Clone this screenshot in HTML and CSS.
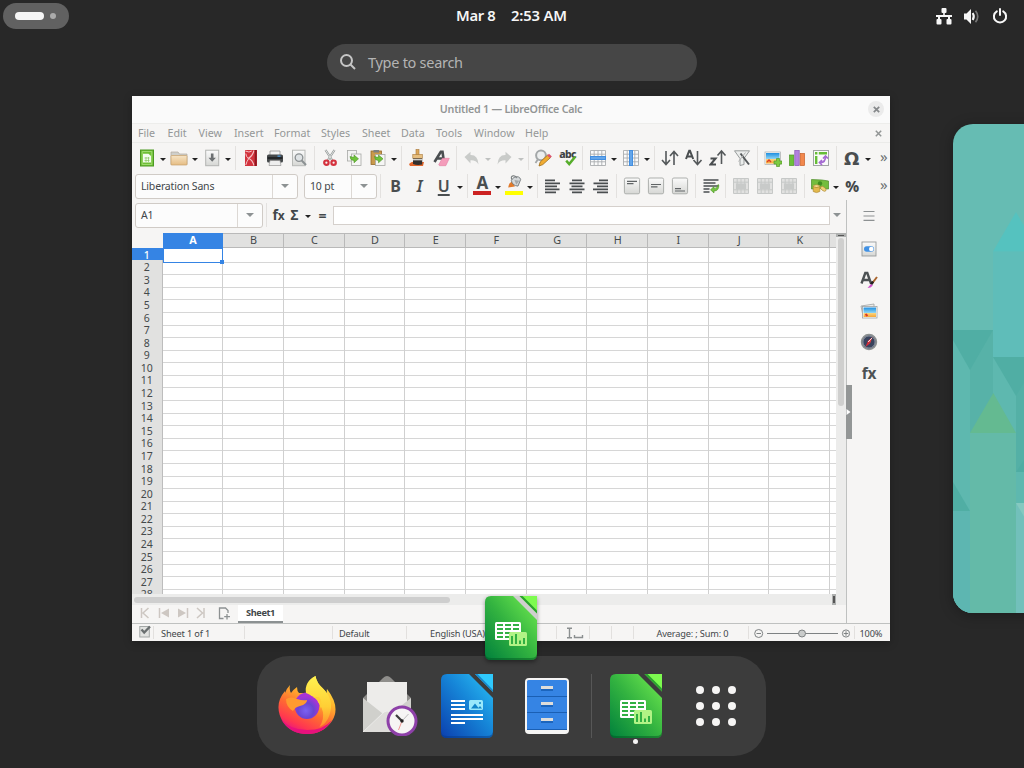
FILE: index.html
```html
<!DOCTYPE html>
<html lang="en">
<head>
<meta charset="utf-8">
<title>Activities</title>
<link rel="stylesheet" href="styles.css">
</head>
<body>
<svg class="defs" aria-hidden="true">
  <defs>
    <linearGradient id="g-calc" x1="0" y1="1" x2="1" y2="0"><stop offset="0" stop-color="#00803c"/><stop offset=".5" stop-color="#33b340"/><stop offset="1" stop-color="#74ee50"/></linearGradient>
    <linearGradient id="g-writer" x1="0" y1="1" x2="1" y2="0"><stop offset="0" stop-color="#0b3fae"/><stop offset=".55" stop-color="#1686d8"/><stop offset="1" stop-color="#2cc3f6"/></linearGradient>
    <linearGradient id="g-fox" x1=".8" y1="0" x2=".3" y2="1"><stop offset="0" stop-color="#fff44f"/><stop offset=".35" stop-color="#ffb62c"/><stop offset=".62" stop-color="#ff6a32"/><stop offset=".85" stop-color="#ff3750"/><stop offset="1" stop-color="#e5108a"/></linearGradient>
    <radialGradient id="g-globe" cx=".45" cy=".65" r=".65"><stop offset="0" stop-color="#7a62f2"/><stop offset=".5" stop-color="#6a45d2"/><stop offset="1" stop-color="#b52fd8"/></radialGradient>
    <linearGradient id="g-flame" x1="0" y1="0" x2="0" y2="1"><stop offset="0" stop-color="#fff250"/><stop offset=".6" stop-color="#ffcf35"/><stop offset="1" stop-color="#ff8a2d"/></linearGradient>
    <linearGradient id="g-box" x1="0" y1="0" x2="0" y2="1"><stop offset="0" stop-color="#fbfbfb"/><stop offset="1" stop-color="#d6d7d4"/></linearGradient>
    <linearGradient id="g-folder" x1="0" y1="0" x2="0" y2="1"><stop offset="0" stop-color="#f6e4c6"/><stop offset="1" stop-color="#e6bd83"/></linearGradient>
    <linearGradient id="g-sky" x1="0" y1="0" x2="0" y2="1"><stop offset="0" stop-color="#1f8fe0"/><stop offset=".55" stop-color="#8cd4f5"/><stop offset=".6" stop-color="#fbd47c"/><stop offset="1" stop-color="#f6a637"/></linearGradient>
    <clipPath id="c-doc"><path d="M0 6Q0 0 6 0H52V58Q52 64 46 64H6Q0 64 0 58Z"/></clipPath>
  </defs>
  <symbol id="new" viewBox="0 0 18 18"><rect x="2.500" y="1" width="13" height="16" fill="#6fbf35" stroke="#4c9a22"/><path d="M4.200 2.500h9.600v13H4.200Z" fill="none" stroke="#a9e07d" stroke-width=".8"/><path d="M5 4.800h5.500l2.500 2.200v6.500H5Z" fill="#f4fcee"/><path d="M6.500 9h5M6.500 11.500h5M8 8v5M10.500 8v5" stroke="#86c460" stroke-width=".7"/></symbol>
  <symbol id="open" viewBox="0 0 18 18"><path d="M1 15.500V3h7l1.500 2H17v10.500Z" fill="#cfcfcb" stroke="#b2aa9d" stroke-width=".7"/><rect x="1" y="6.500" width="16" height="9.500" rx=".6" fill="url(#g-folder)" stroke="#c7a06b" stroke-width=".7"/></symbol>
  <symbol id="save" viewBox="0 0 18 18"><rect x="2.700" y="1.200" width="13" height="15.500" fill="url(#g-box)" stroke="#b3b5b2"/><path d="M7.900 4.500h2.600v4.200h2.400l-3.700 4-3.700-4h2.400Z" fill="#6c7072"/></symbol>
  <symbol id="pdf" viewBox="0 0 18 18"><rect x="3" y="1" width="12" height="16" fill="#d2333d"/><path d="M3.300 2q4 2 6.500 0M3.800 16q1-4 3-6.500-3-1.500-3-5" fill="none" stroke="#f4c4c6" stroke-width="1"/><path d="M12 1.500Q10.500 7 6.500 9.200q4 1.800 5.500 7.300" fill="none" stroke="#f4c4c6" stroke-width="1.100"/><path d="M13.700 1v16" stroke="#8f1720" stroke-width="2"/></symbol>
  <symbol id="print" viewBox="0 0 18 18"><path d="M4 6V2h10v4" fill="#f4f4f4" stroke="#888" stroke-width=".7"/><rect x="1" y="5.500" width="16" height="8" rx="1.600" fill="#45494b"/><rect x="1.600" y="8" width="14.800" height="2" fill="#232629"/><rect x="11.500" y="6.500" width="3" height="1.300" fill="#4f9cde"/><path d="M4 11.500h10l1 5H3Z" fill="#eee" stroke="#888" stroke-width=".6"/></symbol>
  <symbol id="preview" viewBox="0 0 18 18"><rect x="2.500" y="1.200" width="12.500" height="15.500" fill="url(#g-box)" stroke="#b8bab7"/><circle cx="9" cy="8.600" r="3.800" fill="#dfe3e5" stroke="#8c9193" stroke-width="1.300"/><path d="m11.700 11.500 4.300 4.500" stroke="#8c9193" stroke-width="2"/></symbol>
  <symbol id="cut" viewBox="0 0 18 18"><path d="M4.500 1 12 12.500M13.500 1 6 12.500" stroke="#8f9493" stroke-width="2.200"/><path d="M4.500 1 12 12.500M13.500 1 6 12.500" stroke="#e9ebea" stroke-width=".9"/><circle cx="5.400" cy="13.700" r="2.200" fill="none" stroke="#d5323e" stroke-width="2.200"/><circle cx="12.600" cy="13.700" r="2.200" fill="none" stroke="#d5323e" stroke-width="2.200"/></symbol>
  <symbol id="copy" viewBox="0 0 18 18"><rect x="2.500" y="1.500" width="9" height="10.500" fill="#f3f3f2" stroke="#a7a9a6" stroke-width=".8"/><rect x="6.500" y="5" width="9.500" height="11.500" fill="#f7f7f6" stroke="#a7a9a6" stroke-width=".8"/><path d="M5 7.500q0 4 4 4v2.300l4.500-4-4.500-3.800v2.300q-2 0-4-.8Z" fill="#6fc33c" stroke="#4d9325" stroke-width=".6"/></symbol>
  <symbol id="paste" viewBox="0 0 18 18"><rect x="2" y="2" width="10.500" height="13.500" fill="#c99a4b" stroke="#94692a" stroke-width=".8"/><rect x="4.500" y="1" width="5.500" height="2.500" fill="#7d8081"/><rect x="6.500" y="5.500" width="9.500" height="11" fill="#f5f5f4" stroke="#a7a9a6" stroke-width=".8"/><path d="M5.500 7.500q0 4 4 4v2.300l4.500-4-4.500-3.800v2.300q-2 0-4-.8Z" fill="#6fc33c" stroke="#4d9325" stroke-width=".6"/></symbol>
  <symbol id="brush" viewBox="0 0 18 18"><path d="M1 15q3-3 6-2h9l-1 4H2Z" fill="#e3662b"/><rect x="8" y=".5" width="3" height="6.500" fill="#dca75c" stroke="#a9793a" stroke-width=".6"/><rect x="4.800" y="5.500" width="9.500" height="4" fill="#e7bf80" stroke="#a9793a" stroke-width=".6"/><path d="M5 9.500h9.200v6q-5 1.200-9.200-.5Z" fill="#33302e"/><path d="M5 10.700h9.200" stroke="#d8d8d6" stroke-width="1.300"/></symbol>
  <symbol id="clear" viewBox="0 0 18 18"><path d="M2.500 13 8.800 2.800h1.700l1.400 9.700M5.500 9.500h5.500" fill="none" stroke="#4a4e50" stroke-width="2.600"/><path d="m6.700 15.800 3.600-6.500h7l-3.500 7.400H7.500Z" fill="#f49cba" stroke="#e37ca1" stroke-width=".6"/></symbol>
  <symbol id="undo" viewBox="0 0 18 18"><path d="m1.500 8 6-5.200v3.200q7.500-.3 8 9.500-2.400-4.500-8-4.200v3.200Z" fill="#c9cbc9"/></symbol>
  <symbol id="find" viewBox="0 0 18 18"><circle cx="7" cy="6.300" r="4.900" fill="#eceeee" stroke="#a3a7a8" stroke-width="2"/><path d="m3.800 10.500-2.300 3.500" stroke="#a3a7a8" stroke-width="1.800"/><path d="m5 17 1.200-4 7.500-7 2.800 2.600-7.700 7Z" fill="#f1ac32" stroke="#9d6b13" stroke-width=".8"/><path d="m13.200 6.500 1.800-1.800 2.900 2.700-1.900 1.700Z" fill="#dc5470"/></symbol>
  <symbol id="check" viewBox="0 0 18 18"><path d="m7.200 11.700 3 3.300 6-7.200" fill="none" stroke="#56ad2b" stroke-width="2.500"/></symbol>
  <symbol id="rows" viewBox="0 0 18 18"><path d="M1.500 1.500h15v15h-15ZM1.500 5.200h15M1.500 12.800h15M5.200 1.500v15M9 1.500v15M12.800 1.500v15" fill="#fbfbfb" stroke="#a9adaf" stroke-width=".9"/><rect x="1" y="7" width="16" height="4" fill="#428ee0"/><path d="M2 9h14" stroke="#84bcf3"/></symbol>
  <symbol id="sort" viewBox="0 0 18 18"><path d="M5 2v13M1 11l4 4.500L9 11M13 16V3M9 7l4-4.500L17 7" fill="none" stroke="#54585a" stroke-width="1.600"/></symbol>
  <symbol id="az" viewBox="0 0 18 18"><path d="M1 10 4.200 1.800h.8L8.200 10M2.200 7.500H7" fill="none" stroke="#4a4e50" stroke-width="2"/><path d="M12.500 2v13M8.500 11l4 4.500 4-4.500" fill="none" stroke="#54585a" stroke-width="1.600"/></symbol>
  <symbol id="za" viewBox="0 0 18 18"><path d="M1.500 9.500h5l-5 6h5.500" fill="none" stroke="#4a4e50" stroke-width="2.100"/><path d="M12.500 15V2M8.500 6.500l4-4.500 4 4.500" fill="none" stroke="#54585a" stroke-width="1.600"/></symbol>
  <symbol id="filter" viewBox="0 0 18 18"><path d="M1.500 1.800h15L11 9.500v6l-4 1V9.500Z" fill="#ebedec" stroke="#989c9c"/><path d="m7.500 4.500 8.500 11" stroke="#54585a" stroke-width="2"/><path d="m12.500 3.500-7 9" stroke="#b5b5b5"/></symbol>
  <symbol id="image" viewBox="0 0 18 18"><rect x="1" y="3" width="15.500" height="12.500" fill="#fff" stroke="#a5a9a8" stroke-width=".7"/><rect x="2" y="4" width="13.500" height="10.500" fill="url(#g-sky)"/><path d="m3 13 2-2 2 2" stroke="#dd3d28" stroke-width="1.500" fill="none"/></symbol>
  <symbol id="plus" viewBox="0 0 18 18"><path d="M12.500 9.500h3v2.500H18v3h-2.500v2.500h-3V15H10v-3h2.500Z" fill="#7ecb42" stroke="#55992b" stroke-width=".7"/></symbol>
  <symbol id="chart" viewBox="0 0 18 18"><rect x="1.500" y="6" width="4.300" height="10.500" fill="#6dc03b" stroke="#4b9824" stroke-width=".7"/><rect x="6.800" y="1.500" width="4.400" height="15" fill="#b180de" stroke="#8652b7" stroke-width=".7"/><rect x="12.200" y="4.500" width="4.300" height="12" fill="#f2884d" stroke="#c65f27" stroke-width=".7"/></symbol>
  <symbol id="pivot" viewBox="0 0 18 18"><rect x="1.500" y="1.500" width="15" height="15" fill="#fafafa" stroke="#a1a5a4"/><path d="M3 4.200h2.400M6.800 4.200H15M4.200 7v8" fill="none" stroke="#66bd38" stroke-width="2.400"/><path d="M8.500 13.500q5 0 5-6M11 9.500 13.500 7 16 9.500M10 11l-2.500 2.500L10 16" fill="none" stroke="#a56bd2" stroke-width="1.700"/></symbol>
  <symbol id="al" viewBox="0 0 18 18"><path d="M1 3.300h10M1 6.300h15M1 9.300h12M1 12.300h14.500M1 15.300h11" stroke="#4a4e50" stroke-width="1.700"/></symbol>
  <symbol id="ac" viewBox="0 0 18 18"><path d="M4 3.300h10M1.500 6.300h15M3.500 9.300h11M1.500 12.300h15M4 15.300h10" stroke="#4a4e50" stroke-width="1.700"/></symbol>
  <symbol id="ar" viewBox="0 0 18 18"><path d="M7 3.300h9M1.500 6.300H16M5 9.300h11M1 12.300h15M5 15.300h11" stroke="#4a4e50" stroke-width="1.700"/></symbol>
  <symbol id="vt" viewBox="0 0 18 18"><rect x="1.400" y="1" width="15.200" height="15.800" rx="1.500" fill="url(#g-box)" stroke="#adafad"/><path d="M4 4.300h10M4 6.700h6.500" stroke="#606466" stroke-width="1.200"/></symbol>
  <symbol id="vm" viewBox="0 0 18 18"><rect x="1.400" y="1" width="15.200" height="15.800" rx="1.500" fill="url(#g-box)" stroke="#adafad"/><path d="M4 7.500h10M4 9.900h6.500" stroke="#606466" stroke-width="1.200"/></symbol>
  <symbol id="vb" viewBox="0 0 18 18"><rect x="1.400" y="1" width="15.200" height="15.800" rx="1.500" fill="url(#g-box)" stroke="#adafad"/><path d="M4 11.700h6M4 14h10" stroke="#606466" stroke-width="1.200"/></symbol>
  <symbol id="wrap" viewBox="0 0 18 18"><path d="M1.500 3h15M1.500 6h12M1.500 9h15M1.500 12h6M1.500 15h6" stroke="#4a4e50" stroke-width="1.700"/><path d="M16 7.500q0 4-4 4V9.500l-3.500 3.300L12 16v-2q5 0 4.800-6Z" fill="#74c442" stroke="#4f9627" stroke-width=".6"/></symbol>
  <symbol id="merge" viewBox="0 0 18 18"><path d="M1.500 1.500h15v15h-15ZM1.500 5.200h15M1.500 12.800h15M5.200 1.500v15M9 1.500v15M12.800 1.500v15" fill="#e1e1e0" stroke="#c6c8c7"/><rect x="4" y="6.500" width="10" height="5.500" fill="#c8cac9"/></symbol>
  <symbol id="money" viewBox="0 0 18 18"><path d="M.5 2.500 11 3l6.500 1v8l-6-.5L.5 12Z" fill="#73bd3d" stroke="#4b8b25" stroke-width=".7"/><circle cx="9" cy="6.500" r="2.200" fill="#3f8d20"/><ellipse cx="5.500" cy="9.300" rx="3.300" ry="1.500" fill="#f6dd92" stroke="#a8822b" stroke-width=".6"/><path d="M2.200 9.500v5q3.300 2.200 6.600 0v-5q-3.300 2-6.600 0Z" fill="#e3b94c" stroke="#a8822b" stroke-width=".6"/><ellipse cx="12.300" cy="11.800" rx="3.200" ry="1.800" transform="rotate(38 12.300 11.800)" fill="#efd27a" stroke="#a8822b" stroke-width=".6"/></symbol>
  <symbol id="bucket" viewBox="0 0 18 18"><path d="M2.500 14q.5-5.500 5-7l2.500 6Z" fill="#e17a2b"/><path d="m6 6 3-3.500q6-2 7.500 2.500l-3 7.500q-6.500-.5-7.500-6.500Z" fill="#d4d8da" stroke="#6e7476"/><path d="m9.500 5.500 5.500 1-3.500 4.500Z" fill="#a4a9ab"/><path d="M6.500 5q-1.500-3.500 1.500-4t4 2.500" fill="none" stroke="#777c7e" stroke-width="1.200"/></symbol>
  <symbol id="calc" viewBox="0 0 52 64"><g clip-path="url(#c-doc)"><path d="M0 0H28L52 24V64H0Z" fill="url(#g-calc)"/><path d="M34.500 0H52V17.500Z" fill="#7dfb4f"/><path d="m34.500 0 17.500 17.500v-3L37.500 0Z" fill="#2aa02f"/><path d="M0 57q0 5 6 5h40q6 0 6-5v7H0Z" fill="#00501f" opacity=".45"/></g><rect x="10" y="26" width="26" height="18" rx="1.500" fill="#fff"/><path d="M12 29h6M20 29h6M28 29h6M12 33h6M20 33h6M28 33h6M12 37h6M20 37h6M28 37h6M12 41h6M20 41h6" stroke="#31b043" stroke-width="2"/><rect x="24" y="36" width="18" height="14" rx="1.500" fill="#b1f385"/><path d="M27 48v-8M31 48V38M35 48v-3.500M39 48v-6" stroke="#31b043" stroke-width="2"/></symbol>
</svg>

<header class="topbar">
  <div class="workspaces"><i class="ws-on"></i><i class="ws-off"></i></div>
  <div class="clock"><span class="date">Mar 8</span><span class="time">2:53 AM</span></div>
  <div class="tray">
    <svg width="16" height="17" viewBox="0 0 16 17" fill="#f7f7f7"><rect x="5.500" width="5" height="5" rx="1"/><rect x=".5" y="11" width="5" height="5.500" rx="1"/><rect x="10.500" y="11" width="5" height="5.500" rx="1"/><path d="M7.200 4h1.600v3H16v2h-2v3h-2V9H4v3H2V9H0V7h7.200Z"/></svg>
    <svg width="18" height="17" viewBox="0 0 18 17"><path d="M1 5.500h2.500L8 1v15l-4.500-4.500H1Z" fill="#f7f7f7"/><path d="M9.700 5q2.200 3.500 0 7" fill="none" stroke="#f7f7f7" stroke-width="2"/><path d="M12.500 2.800q4.500 5.700 0 11.400" fill="none" stroke="#777" stroke-width="1.700"/></svg>
    <svg width="16" height="16" viewBox="0 0 16 16" fill="none" stroke="#f7f7f7" stroke-width="2" stroke-linecap="round"><path d="M4.800 3.300a6.100 6.100 0 1 0 6.400 0M8 1V7"/></svg>
  </div>
</header>

<div class="search">
  <svg width="18" height="18" viewBox="0 0 18 18" fill="none" stroke="#c6c6c6" stroke-width="2"><circle cx="7.500" cy="7.500" r="5.500"/><path d="m11.500 11.500 4.500 4.500"/></svg>
  <span>Type to search</span>
</div>

<main class="window">
  <div class="titlebar"><span class="title">Untitled 1 — LibreOffice Calc</span><span class="close"><svg width="7" height="7" viewBox="0 0 7 7"><path d="m.8.8 5.400 5.400m0-5.400L.8 6.200" stroke="#85888a" stroke-width="1.700"/></svg></span></div>
  <nav class="menubar">
    <span class="m-file">File</span><span class="m-edit">Edit</span><span class="m-view">View</span><span class="m-insert">Insert</span><span class="m-format">Format</span><span class="m-styles">Styles</span><span class="m-sheet">Sheet</span><span class="m-data">Data</span><span class="m-tools">Tools</span><span class="m-window">Window</span><span class="m-help">Help</span>
    <svg class="docclose" width="7" height="7" viewBox="0 0 7 7"><path d="m.8.8 5.400 5.400m0-5.400L.8 6.200" stroke="#929595" stroke-width="1.500"/></svg>
  </nav>

  <div class="toolbar standard">
    <b class="ic"><svg><use href="#new"/></svg></b><i class="car"></i>
    <b class="ic"><svg><use href="#open"/></svg></b><i class="car"></i>
    <b class="ic"><svg><use href="#save"/></svg></b><i class="car"></i><i class="sep"></i>
    <b class="ic"><svg><use href="#pdf"/></svg></b><b class="ic"><svg><use href="#print"/></svg></b><b class="ic"><svg><use href="#preview"/></svg></b><i class="sep"></i>
    <b class="ic"><svg><use href="#cut"/></svg></b><b class="ic"><svg><use href="#copy"/></svg></b><b class="ic"><svg><use href="#paste"/></svg></b><i class="car"></i><i class="sep"></i>
    <b class="ic"><svg><use href="#brush"/></svg></b><b class="ic"><svg><use href="#clear"/></svg></b><i class="sep"></i>
    <b class="ic"><svg><use href="#undo"/></svg></b><i class="car off"></i><b class="ic flip"><svg><use href="#undo"/></svg></b><i class="car off"></i><i class="sep"></i>
    <b class="ic"><svg><use href="#find"/></svg></b><b class="ic spell"><span>abc</span><svg><use href="#check"/></svg></b><i class="sep"></i>
    <b class="ic"><svg><use href="#rows"/></svg></b><i class="car"></i><b class="ic turn"><svg><use href="#rows"/></svg></b><i class="car"></i><i class="sep"></i>
    <b class="ic"><svg><use href="#sort"/></svg></b><b class="ic"><svg><use href="#az"/></svg></b><b class="ic"><svg><use href="#za"/></svg></b><b class="ic"><svg><use href="#filter"/></svg></b><i class="sep"></i>
    <b class="ic"><svg><use href="#image"/><use href="#plus"/></svg></b><b class="ic"><svg><use href="#chart"/></svg></b><b class="ic"><svg><use href="#pivot"/></svg></b><i class="sep"></i>
    <b class="ic omega">Ω</b><i class="car"></i><span class="more">»</span>
  </div>

  <div class="toolbar formatting">
    <div class="combo font"><span>Liberation Sans</span><i class="drop"></i></div>
    <div class="combo size"><span>10 pt</span><i class="drop"></i></div><i class="sep"></i>
    <b class="ic ltr">B</b><b class="ic ltr ital">I</b><b class="ic ltr under">U</b><i class="car"></i><i class="sep"></i>
    <b class="ic ltr fontcolor">A</b><i class="car"></i><b class="ic hilite"><svg><use href="#bucket"/></svg></b><i class="car"></i><i class="sep"></i>
    <b class="ic"><svg><use href="#al"/></svg></b><b class="ic"><svg><use href="#ac"/></svg></b><b class="ic"><svg><use href="#ar"/></svg></b><i class="sep"></i>
    <b class="ic"><svg><use href="#vt"/></svg></b><b class="ic"><svg><use href="#vm"/></svg></b><b class="ic"><svg><use href="#vb"/></svg></b><i class="sep"></i>
    <b class="ic"><svg><use href="#wrap"/></svg></b><i class="sep"></i>
    <b class="ic"><svg><use href="#merge"/></svg></b><b class="ic"><svg><use href="#merge"/></svg></b><b class="ic"><svg><use href="#merge"/></svg></b><i class="sep"></i>
    <b class="ic"><svg><use href="#money"/></svg></b><i class="car"></i><b class="ic pct">%</b><span class="more">»</span>
  </div>

  <div class="work">
    <section class="editor">
      <div class="formula">
        <div class="combo name"><span>A1</span><i class="drop"></i></div><i class="sep"></i>
        <b class="fx">f<small>x</small></b><b class="sigma">Σ</b><i class="car"></i><b class="eq">=</b><div class="input"></div><i class="drop"></i>
      </div>
      <div class="sheetwrap">
        <div class="sheet" id="sheet"></div>
        <div class="vscroll"><i class="split"></i><i class="vthumb"></i></div>
      </div>
      <div class="hscroll"><i class="hthumb"></i><i class="hsplit"></i></div>
      <div class="tabs">
        <svg width="66" height="12" viewBox="0 0 66 12" fill="none" stroke="#cdc7c2" stroke-width="1.500"><path d="M1.500 1v10M8.500 1 3 6l5.500 5M19.500 1v10M47.500 1v10M57 1l5.500 5L57 11M64 1v10"/><path d="M29 1.500v9L21 6ZM38 1.500v9L46 6Z" fill="#cdc7c2" stroke="none"/></svg>
        <svg class="addtab" width="13" height="13" viewBox="0 0 13 13" fill="none" stroke="#8d9192" stroke-width="1.300"><path d="M5.500 11.500h-4V1h6L10 3.500V6M9 7v5.500M6.200 9.700H12"/></svg>
        <span class="tab">Sheet1</span>
      </div>
    </section>
    <aside class="sidebar">
      <i class="grip"><svg width="5" height="8" viewBox="0 0 5 8"><path d="M.5 1v6l4-3Z" fill="#fff"/></svg></i>
      <svg class="s-menu" viewBox="0 0 18 18"><path d="M3.500 4.500h11M3.500 9h11M3.500 13.300h11" stroke="#8d9192" stroke-width="1.200"/></svg>
      <svg viewBox="0 0 18 18"><rect x="2" y="2" width="14" height="14" fill="url(#g-box)" stroke="#979b9b" stroke-width=".9"/><rect x="4" y="6.300" width="10" height="5.400" rx="2.700" fill="#4191e4"/><circle cx="11.300" cy="9" r="2.300" fill="#fff"/></svg>
      <svg viewBox="0 0 18 18"><path d="M1.500 12.500 5.300 2h2l3.700 10.500M3.500 9h6" fill="none" stroke="#4d5254" stroke-width="2.400"/><path d="m17 6-5 6.500" stroke="#a9642d" stroke-width="2"/><path d="m13 10.500-2 3" stroke="#222" stroke-width="2.500"/><path d="m7.500 17 3.500-4 1.800 1.500q-2 2.500-5.300 2.500Z" fill="#cf50ca"/></svg>
      <svg viewBox="0 0 18 18"><path d="m1 4 13-2v3L3 14Z" fill="#ecebe8" stroke="#9ea2a2" stroke-width=".8"/><rect x="2.500" y="4.500" width="14.500" height="11.500" fill="#fff" stroke="#9ea2a2" stroke-width=".8"/><rect x="3.500" y="5.500" width="12.500" height="9.500" fill="url(#g-sky)"/><path d="m5.500 12 2 2" stroke="#dc3a28" stroke-width="2"/></svg>
      <svg viewBox="0 0 18 18"><circle cx="9" cy="9" r="7.300" fill="#39435d" stroke="#8c9091" stroke-width="1.800"/><circle cx="9" cy="9" r="6" fill="none" stroke="#aeb4bd" stroke-width=".6"/><path d="m12.500 4-2.300 6.200-2.400-2.200Z" fill="#f04141"/><path d="m5.500 14 2.300-6 2.400 2.200Z" fill="#d22d3a"/><path d="m12 5-4 4" stroke="#fff" stroke-width=".8"/></svg>
      <b class="s-fx">fx</b>
    </aside>
  </div>

  <footer class="status">
    <span class="st-save"><svg width="12" height="13" viewBox="0 0 12 13"><rect x=".8" y="1.500" width="9.500" height="10.500" fill="#e2e3e1" stroke="#a3a7a6"/><path d="m2.500 4.500 2.700 3L11 1.500" fill="none" stroke="#6a6f70" stroke-width="2.400"/></svg></span>
    <span class="st-sheet">Sheet 1 of 1</span><span></span><span class="st-style">Default</span><span class="st-lang">English (USA)</span>
    <span class="st-ins"><svg width="18" height="12" viewBox="0 0 18 12" fill="none" stroke="#8b8f90" stroke-width="1.400"><path d="M1 1.200h5M1 10.800h5M3.500 1v10M8.500 8v2.500h8V8"/></svg></span>
    <span></span><span></span><span class="st-sum">Average: ; Sum: 0</span>
    <span class="st-zoom"><svg width="96" height="11" viewBox="0 0 96 11" fill="none" stroke="#7e8283"><path d="M13 5.500h71"/><circle cx="4.700" cy="5.500" r="4"/><path d="M2.500 5.500H7"/><circle cx="48" cy="5.500" r="3.500" fill="#c9cbca"/><circle cx="92" cy="5.500" r="3.600"/><path d="M89.700 5.500h4.600M92 3.200v4.600"/></svg></span>
    <span class="st-pct">100%</span>
  </footer>
  <svg class="badge" viewBox="0 0 52 64"><path d="M27 0h8.500L52 16.500V25Z" fill="#cfcfce"/><use href="#calc"/></svg>
</main>

<aside class="neighbour">
  <svg width="100" height="489" viewBox="0 0 100 489">
    <rect width="100" height="489" fill="#66bcb3"/>
    <path d="M40 127.500h46V233H40Z" fill="#5fbdb9"/><path d="m40 127.500 23-39.500 23 39.500Z" fill="#55c2bf"/>
    <path d="M0 206h17v283H0Z" fill="#5eb8af"/><path d="M17 206h23v140H17Z" fill="#57b2a8"/><path d="M0 206h40L17 246 0 216Z" fill="#50aea4"/>
    <path d="M40 233h23v256H40Z" fill="#5eb8af"/><path d="M63 233h37v115H63Z" fill="#54b0a6"/><path d="M40 233h46l-23 39Z" fill="#50aea4"/>
    <path d="M63 348h37v32H63Z" fill="#5eb8af"/><path d="m63 348 10-15v15Z" fill="#4fada3"/>
    <path d="M63 379h37v110H63Z" fill="#72c0bb"/><path d="M63 379h37L79 406Z" fill="#85c9c0"/>
    <path d="m0 358 17 29H0Z" fill="#50aea4"/><path d="M0 387h17v102H0Z" fill="#5db6b1"/>
    <path d="M17 309h46v180H17Z" fill="#64baa8"/><path d="m17 309 23.300-40L63 309Z" fill="#64ba91"/>
  </svg>
</aside>

<div class="dock">
  <span class="app fox"><svg width="60" height="62" viewBox="0 0 60 62">
    <path d="M13 11q-1 5 1 8 3-4 6-6 0 4 2 6H31Q27 8 38.500 2q1 7 7 12 3 3 4.500 6-.5-3 0-5Q64 33 55 47 46 60 30 60 14 60 6 48-4 31 8 17q0-1 0 2 2-5 5-8Z" fill="url(#g-fox)"/>
    <circle cx="30" cy="31" r="12.500" fill="url(#g-globe)"/>
    <path d="M29 19Q27 8 38.500 2q1 7 8 13 11 11 6 26-3 9-10 12 10-16-7-30-3-3-6.500-4Z" fill="url(#g-flame)"/>
    <circle cx="30" cy="33" r="12" fill="url(#g-globe)"/>
    <path d="M9 25q5-3 11 0 6 2 10 1 0 4-7 6-5 1-7 5-7-4-7-12Z" fill="#ff9b2f"/>
    <path d="M36 23q8 3 7 12 3-7-1-12Z" fill="#ffcf35"/>
    <path d="M4 45q9 11 26 11t25-10q-8 14-25 14T4 45Z" fill="#e7117d"/>
  </svg></span>
  <span class="app mail"><svg width="56" height="62" viewBox="0 0 56 62">
    <path d="m1 24 20-20q4-4 8 0l20 20v8H1Z" fill="#8f8e8b"/><path d="M5 8h40v33H5Z" fill="#edecea"/><path d="M1 24 25 43 49 24v34H1Z" fill="#d0d0cc"/><path d="m1 58 21-20q3-2 6 0l21 20Z" fill="#deddda"/><path d="m1 58 21-20q3-2 6 0" fill="none" stroke="#f4f4f2" stroke-width=".7"/>
    <circle cx="40" cy="47" r="14" fill="#f6f5f4" stroke="#8d40a8" stroke-width="3"/><path d="m34 41 6 6" stroke="#3c3c3c" stroke-width="2.200"/><path d="m40 47 6.500-7" stroke="#bbb"/><path d="m40 47-3.500 9" stroke="#f09a95"/><circle cx="40" cy="47" r="1.700" fill="#222"/>
  </svg></span>
  <span class="app"><svg width="52" height="64" viewBox="0 0 52 64"><g clip-path="url(#c-doc)"><path d="M0 0H28L52 24V64H0Z" fill="url(#g-writer)"/><path d="M34 0H52V18Z" fill="#2fc9fc"/><path d="m34 0 18 18v-2L36.500 0Z" fill="#1787cc"/><path d="M0 57q0 5 6 5h40q6 0 6-5v7H0Z" fill="#063a86" opacity=".5"/></g><path d="M10 27h14M10 31h14M10 35h14M10 41h32M10 45h32M10 49h14" stroke="#fff" stroke-width="2"/><rect x="28" y="26" width="14" height="10" rx="1.500" fill="#9ae9fb"/><path d="m30 34.500 4-5 4 5ZM37 34.500l2-2.500 2 2.500Z" fill="#1286c9"/><circle cx="39" cy="29" r="1" fill="#1286c9"/></svg></span>
  <span class="app"><svg width="44" height="56" viewBox="0 0 44 56"><rect width="44" height="56" rx="4" fill="#f6f5f4"/><rect x="2" y="2" width="40" height="50" rx="1.500" fill="#3584e4"/><path d="M2 18.500h40M2 34.500h40M2 51.500h40" stroke="#1a5fb4"/><path d="M16 12h12M16 28h12M16 44h12" stroke="#1c65bd" stroke-width="2"/><path d="M16 9.500h12M16 25.500h12M16 41.500h12" stroke="#deddda" stroke-width="3"/></svg></span>
  <i class="docksep"></i>
  <span class="app running"><svg width="52" height="64"><use href="#calc"/></svg></span>
  <span class="app"><svg width="40" height="40" viewBox="0 0 40 40" fill="#f6f5f4"><circle cx="4" cy="4" r="4"/><circle cx="20" cy="4" r="4"/><circle cx="36" cy="4" r="4"/><circle cx="4" cy="20" r="4"/><circle cx="20" cy="20" r="4"/><circle cx="36" cy="20" r="4"/><circle cx="4" cy="36" r="4"/><circle cx="20" cy="36" r="4"/><circle cx="36" cy="36" r="4"/></svg></span>
</div>
<script src="sheet.js"></script>
</body>
</html>
```
FILE: styles.css
```css
* { box-sizing: border-box; }
body { margin: 0; width: 1024px; height: 768px; overflow: hidden; position: relative; background: #282828; font-family: "Noto Sans", "Open Sans", sans-serif; display: flex; flex-direction: column; }
i { font-style: normal; }
.defs { position: absolute; width: 0; height: 0; }

.topbar { height: 32px; flex: none; display: grid; grid-template-columns: 1fr auto 1fr; align-items: center; padding: 0 16px 0 3px; }
.workspaces { width: 66px; height: 26px; border-radius: 13px; background: #616161; display: flex; align-items: center; padding-left: 12px; gap: 6px; }
.ws-on { width: 29px; height: 8px; border-radius: 4px; background: #f6f6f6; }
.ws-off { width: 6px; height: 6px; border-radius: 3px; background: #ababab; }
.clock { display: flex; gap: 16px; color: #f6f6f6; font-weight: 600; font-size: 14.800px; line-height: 20px; padding: 0 0 2px 13px; }
.date { width: 39px; white-space: nowrap; letter-spacing: -.35px; }
.time { width: 57px; white-space: nowrap; letter-spacing: -.15px; }
.tray { display: flex; justify-content: flex-end; align-items: center; gap: 11px; }

.search { flex: none; width: 370px; height: 37px; margin: 12px 0 0 327px; border-radius: 18.5px; background: #464646; color: #b4b4b4; display: flex; align-items: center; gap: 11px; padding: 0 0 1px 12px; font-size: 14.500px; letter-spacing: -.28px; }

.window { position: relative; flex: none; width: 758px; height: 545px; margin: 15px 0 0 132px; background: #f6f5f4; color: #42474a; box-shadow: 0 2px 8px rgba(0,0,0,.25); display: flex; flex-direction: column; }
.titlebar { flex: none; height: 28px; background: #fafafa; border-bottom: 1px solid #ededeb; display: grid; grid-template-columns: 1fr auto 1fr; align-items: center; color: #929595; }
.title { grid-column: 2; font-size: 10.7px; font-weight: 600; letter-spacing: -.23px; padding-bottom: 2px; }
.close { justify-self: end; width: 16px; height: 16px; border-radius: 8px; margin: 0 6px 1px 0; background: #ebebeb; display: flex; align-items: center; justify-content: center; }
.menubar { flex: none; height: 19px; display: flex; align-items: center; padding-left: 6px; font-size: 10.7px; color: #949797; border-bottom: 1px solid #ebebe9; }
.menubar span { flex: none; }
.m-file { width: 29.5px; } .m-edit { width: 31px; } .m-view { width: 35.5px; } .m-insert { width: 40px; }
.m-format { width: 47px; } .m-styles { width: 41px; } .m-sheet { width: 39px; } .m-data { width: 35px; }
.m-tools { width: 38px; } .m-window { width: 51px; }
.docclose { margin: 0 8px 0 auto; }

.toolbar { flex: none; display: flex; align-items: center; }
.standard { height: 30px; padding-left: 2.500px; }
.formatting { height: 27px; padding: 0 0 1px 3px; }
.ic { flex: none; width: 24.2px; height: 22px; display: flex; align-items: center; justify-content: center; }
.formatting .ic { width: 24.150px; }
.ic svg { width: 18px; height: 18px; flex: none; }
.flip svg { transform: scaleX(-1); }
.turn svg { transform: rotate(90deg); }
.car { flex: none; width: 8px; display: flex; justify-content: center; }
.standard .car { width: 8.400px; }
.car::before { content: ""; border: 3px solid transparent; border-top: 3.500px solid #222; border-bottom: 0; margin-top: 2px; }
.off::before { border-top-color: #bfc1c0 !important; }
.sep { flex: none; width: 6.4px; height: 24px; display: flex; justify-content: center; }
.sep::before { content: ""; width: 1px; background: #e3e1df; }
.spell { display: grid; grid-template: 1fr / 1fr; place-items: center; }
.spell > * { grid-area: 1 / 1; }
.spell span { font-size: 10.500px; line-height: 10px; color: #3e4244; font-weight: 800; letter-spacing: -.7px; align-self: start; padding-top: 2px; }
.omega { font-size: 18px; color: #4a4e50; font-family: "DejaVu Sans"; }
.more { margin-left: auto; width: 10px; font-size: 15px; line-height: 20px; color: #6d7173; padding-bottom: 4px; }
.combo { flex: none; height: 25px; border: 1px solid #d0cbc6; border-radius: 3px; background: #fcfcfc; display: flex; align-items: stretch; justify-content: space-between; font-size: 10.500px; letter-spacing: -.17px; }
.combo span { padding-left: 5px; line-height: 23px; }
.drop { flex: none; width: 25px; display: flex; align-items: center; justify-content: center; border-left: 1px solid #dcd8d4; }
.drop::before { content: ""; border: 4px solid transparent; border-top: 4.500px solid #8d9293; border-bottom: 0; }
.font { width: 163px; margin-right: 6px; }
.size { width: 73px; }
.ltr { font-size: 16px; color: #4a4e50; line-height: 18px; }
.ital { font-style: italic; font-weight: 600; }
.under { text-decoration: underline; text-decoration-thickness: 1.500px; text-underline-offset: 2px; font-weight: 600; }
.fontcolor { flex-direction: column; justify-content: flex-start; font-size: 17px; line-height: 16px; }
.fontcolor::after { content: ""; width: 18px; height: 4px; background: #cc2222; }
.hilite { flex-direction: column; justify-content: flex-start; }
.hilite svg { height: 16px; }
.hilite::after { content: ""; width: 18px; height: 4px; background: #ff0; }
.pct { font-size: 15px; color: #44484a; font-weight: 800; }

.work { flex: 1; display: flex; min-height: 0; }
.editor { width: 715px; border-right: 1px solid #bfc1c0; display: flex; flex-direction: column; }
.formula { flex: none; height: 30px; display: flex; align-items: center; padding-left: 3px; }
.name { width: 128px; }
.fx { width: 18px; text-align: center; font-size: 14px; letter-spacing: -.3px; line-height: 16px; }
.fx small { font-size: 12px; }
.sigma { width: 14px; text-align: center; font-size: 13.500px; }
.formula .car { width: 14px; }
.eq { width: 14px; text-align: center; font-size: 14px; margin-right: 3.600px; }
.input { width: 497px; height: 19px; border: 1px solid #d5d0cc; background: #fff; }
.formula > .drop { border: 0; width: 14px; }
.sheetwrap { flex: none; height: 364px; padding-top: 3px; display: flex; }
.sheet { width: 704px; overflow: hidden; background: #fff; }
.row { display: grid; grid-template-columns: 30.600px repeat(11, 60.700px) 5.700px; height: 12.580px; }
.row > span { border-right: 1px solid #d0d0d0; border-bottom: 1px solid #d6d6d6; }
.row > .num { background: #e1e1e0; border-color: #bdbdbd; font-size: 10.500px; line-height: 14px; text-align: center; color: #44494b; }
.head { height: 14.700px; }
.row.head > span { background: #e1e1e0; border-color: #b9b9b9; border-top: 1px solid #b9b9b9; font-size: 10.800px; line-height: 12px; text-align: center; color: #44494b; padding-left: 1px; }
.row.head > .corner { background: #f6f5f4; border-color: #f6f5f4; }
.row > .num.sel, .row.head > .sel { background: #3584e4; border-color: #3584e4; color: #fff; font-weight: 700; }
.row > .num.sel { font-weight: 500; }
.row > .cursor { position: relative; border: 1px solid #3584e4; }
.cursor::after { content: ""; position: absolute; right: -2px; bottom: -2px; width: 4px; height: 4px; background: #3584e4; }
.row > span:last-child { border-right: 0; }
.vscroll { width: 10px; background: #ececeb; display: flex; flex-direction: column; align-items: center; }
.split { width: 10px; height: 4px; background: linear-gradient(#555, #555) 50% 50% / 6px 1px no-repeat #aeb0af; }
.vthumb { width: 6px; height: 168px; margin-top: 1px; border-radius: 3px; background: #cfcfce; }
.hscroll { flex: none; height: 11px; background: #ececeb; display: flex; align-items: center; padding-left: 2px; }
.hthumb { width: 316px; height: 6px; border-radius: 3px; background: #cecece; }
.hsplit { width: 4px; height: 11px; margin: 0 10px 0 auto; background: linear-gradient(#555, #555) 50% 50% / 2px 7px no-repeat #aeb0af; }
.tabs { flex: 1; display: flex; align-items: center; padding-left: 8px; }
.tabs > svg { margin-bottom: 2px; }
.tabs > .addtab { margin: 0 7px 1px 12px; }
.tab { align-self: stretch; width: 45px; background: #fff; border-bottom: 2px solid #8c9192; font-size: 9.200px; font-weight: 700; letter-spacing: -.38px; line-height: 16px; text-align: center; }
.sidebar { position: relative; flex: 1; display: flex; flex-direction: column; align-items: center; padding: 7px 0 0 1px; color: #4d5254; }
.sidebar > svg { width: 18px; height: 18px; margin-bottom: 13.200px; flex: none; }
.sidebar > .s-menu { margin-bottom: 14.500px; }
.s-fx { font-size: 15.500px; line-height: 18px; letter-spacing: -.3px; }
.grip { position: absolute; left: -1px; top: 185px; width: 6px; height: 54px; background: #939696; display: flex; align-items: center; }

.status { flex: none; height: 18px; border-top: 1px solid #bfc1c0; display: grid; grid-template-columns: 22px 90.500px 88.500px 74px 150px 33px 22px 21.500px 115px 106px 1fr; align-items: center; font-size: 9.200px; letter-spacing: -.15px; white-space: nowrap; }
.status span { height: 13px; line-height: 13px; display: flex; align-items: center; border-right: 1px solid #e2e0de; padding-top: 1px; }
.status span:last-child { border: 0; }
.status .st-save { padding: 0 0 2px 7px; }
.st-sheet { padding-left: 7px; }
.st-style { padding-left: 6px; }
.st-lang { padding-left: 23px; }
.status .st-ins { padding: 0 0 0 9px; }
.st-sum { padding-left: 23px; }
.st-zoom { padding-left: 5px; }
.st-pct { padding-left: 5px; }
.badge { position: absolute; left: 353px; top: 500px; width: 52px; height: 64px; filter: drop-shadow(0 2px 2px rgba(0,0,0,.4)); z-index: 2; }

.neighbour { position: absolute; left: 953px; top: 124px; width: 100px; height: 489px; border-radius: 20px; overflow: hidden; box-shadow: 0 2px 14px rgba(0,0,0,.3); }
.neighbour svg { display: block; }

.dock { flex: none; width: 509px; height: 100px; margin: 15px 0 0 257px; border-radius: 32px; background: #3c3c3c; display: flex; align-items: center; padding: 0 10px; }
.app { width: 80px; height: 100px; display: flex; align-items: center; justify-content: center; }
.fox { padding-bottom: 2px; }
.mail { padding: 0 0 2px 6px; }
.running { display: grid; place-content: center; position: relative; }
.running::after { content: ""; position: absolute; left: 37px; bottom: 12px; width: 5px; height: 5px; border-radius: 50%; background: #f6f5f4; }
.docksep { width: 9px; display: flex; justify-content: center; }
.docksep::before { content: ""; width: 1px; height: 64px; background: #575757; }
```
FILE: sheet.js
```javascript
const sheet = document.getElementById('sheet');

function cell(row, className, text) {
  const el = document.createElement('span');
  if (className) el.className = className;
  if (text) el.textContent = text;
  row.appendChild(el);
}

const head = document.createElement('div');
head.className = 'row head';
cell(head, 'corner');
for (const letter of 'ABCDEFGHIJK') cell(head, letter === 'A' ? 'sel' : '', letter);
cell(head);
sheet.appendChild(head);

for (let n = 1; n <= 28; n++) {
  const row = document.createElement('div');
  row.className = 'row';
  cell(row, n === 1 ? 'num sel' : 'num', String(n));
  for (let c = 0; c < 12; c++) cell(row, n === 1 && c === 0 ? 'cursor' : '');
  sheet.appendChild(row);
}
```
